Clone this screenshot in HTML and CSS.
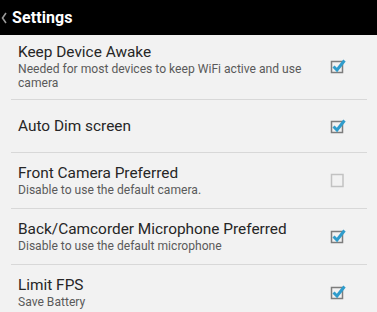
FILE: index.html
```html
<!DOCTYPE html>
<html>
<head>
<meta charset="utf-8">
<link rel="stylesheet" href="styles.css">
</head>
<body>
<div class="app">
  <header class="bar">
    <svg class="back" width="6" height="12" viewBox="0 0 6 12"><path d="M5 1 L1.5 6 L5 11" fill="none" stroke="#9a9a9a" stroke-width="1.6"/></svg>
    <span class="bar-title">Settings</span>
  </header>
  <div class="list">
    <div class="row">
      <div class="text">
        <div class="title">Keep Device Awake</div>
        <div class="summary">Needed for most devices to keep WiFi active and use camera</div>
      </div>
      <div class="check on"><svg width="20" height="18" viewBox="0 0 20 18"><rect x="2.5" y="4.5" width="11" height="11" fill="none" stroke="#7d7d7d" stroke-width="1.5"/><path d="M4.5 9.5 L8 13 L15.5 3.5" fill="none" stroke="#2f9ccc" stroke-width="3" stroke-linejoin="miter"/></svg></div>
    </div>
    <div class="row compact">
      <div class="text">
        <div class="title">Auto Dim screen</div>
      </div>
      <div class="check on"><svg width="20" height="18" viewBox="0 0 20 18"><rect x="2.5" y="4.5" width="11" height="11" fill="none" stroke="#7d7d7d" stroke-width="1.5"/><path d="M4.5 9.5 L8 13 L15.5 3.5" fill="none" stroke="#2f9ccc" stroke-width="3"/></svg></div>
    </div>
    <div class="row">
      <div class="text">
        <div class="title">Front Camera Preferred</div>
        <div class="summary">Disable to use the default camera.</div>
      </div>
      <div class="check"><svg width="20" height="18" viewBox="0 0 20 18"><rect x="2.5" y="3.5" width="11.5" height="12" fill="none" stroke="#c2c2c2" stroke-width="1.5"/></svg></div>
    </div>
    <div class="row">
      <div class="text">
        <div class="title">Back/Camcorder Microphone Preferred</div>
        <div class="summary">Disable to use the default microphone</div>
      </div>
      <div class="check on"><svg width="20" height="18" viewBox="0 0 20 18"><rect x="2.5" y="4.5" width="11" height="11" fill="none" stroke="#7d7d7d" stroke-width="1.5"/><path d="M4.5 9.5 L8 13 L15.5 3.5" fill="none" stroke="#2f9ccc" stroke-width="3"/></svg></div>
    </div>
    <div class="row last">
      <div class="text">
        <div class="title">Limit FPS</div>
        <div class="summary">Save Battery</div>
      </div>
      <div class="check on"><svg width="20" height="18" viewBox="0 0 20 18"><rect x="2.5" y="4.5" width="11" height="11" fill="none" stroke="#7d7d7d" stroke-width="1.5"/><path d="M4.5 9.5 L8 13 L15.5 3.5" fill="none" stroke="#2f9ccc" stroke-width="3"/></svg></div>
    </div>
  </div>
</div>
</body>
</html>
```

FILE: styles.css
```css
* { box-sizing: border-box; }
html, body { margin: 0; padding: 0; }
body {
  background: #f2f2f2;
  font-family: Roboto, "Noto Sans", sans-serif;
  width: 377px;
  height: 312px;
  overflow: hidden;
}
.bar {
  height: 35px;
  background: #000;
  display: flex;
  align-items: center;
  padding-left: 1px;
  gap: 5px;
}
.back { margin-top: 1px; }
.bar-title {
  color: #fff;
  font-weight: bold;
  font-size: 16px;
  letter-spacing: 0.1px;
}
.list {
  margin: 0 10px 0 11px;
}
.row {
  display: flex;
  align-items: center;
  min-height: 56px;
  padding: 7px 0 9px 7px;
  border-bottom: 1px solid #d8d8d8;
}
.row.compact { min-height: 53px; padding-top: 8px; padding-bottom: 8px; }
.row.last { border-bottom: none; }
.text {
  flex: 1;
  padding-right: 20px;
}
.title {
  font-size: 15.4px;
  line-height: 20px;
  color: #262626;
}
.summary {
  font-size: 12.1px;
  line-height: 14px;
  color: #5a5a5a;
}
.check {
  width: 38px;
  flex: none;
  display: flex;
  justify-content: flex-start;
}
```
